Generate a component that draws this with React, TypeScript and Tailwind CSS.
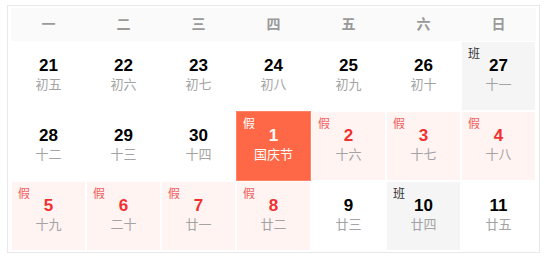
const weekDays = ["一", "二", "三", "四", "五", "六", "日"];

type Day = {
  day: string;
  lunar: string;
  tag?: "假" | "班";
  kind?: "holiday" | "work" | "festival";
};

const rows: Day[][] = [
  [
    { day: "21", lunar: "初五" },
    { day: "22", lunar: "初六" },
    { day: "23", lunar: "初七" },
    { day: "24", lunar: "初八" },
    { day: "25", lunar: "初九" },
    { day: "26", lunar: "初十" },
    { day: "27", lunar: "十一", tag: "班", kind: "work" },
  ],
  [
    { day: "28", lunar: "十二" },
    { day: "29", lunar: "十三" },
    { day: "30", lunar: "十四" },
    { day: "1", lunar: "国庆节", tag: "假", kind: "festival" },
    { day: "2", lunar: "十六", tag: "假", kind: "holiday" },
    { day: "3", lunar: "十七", tag: "假", kind: "holiday" },
    { day: "4", lunar: "十八", tag: "假", kind: "holiday" },
  ],
  [
    { day: "5", lunar: "十九", tag: "假", kind: "holiday" },
    { day: "6", lunar: "二十", tag: "假", kind: "holiday" },
    { day: "7", lunar: "廿一", tag: "假", kind: "holiday" },
    { day: "8", lunar: "廿二", tag: "假", kind: "holiday" },
    { day: "9", lunar: "廿三" },
    { day: "10", lunar: "廿四", tag: "班", kind: "work" },
    { day: "11", lunar: "廿五" },
  ],
];

function Cell({ d }: { d: Day }) {
  const bg =
    d.kind === "festival"
      ? "bg-[#ff6846] border-[#ff8566]"
      : d.kind === "holiday"
        ? "bg-[#fff4f2] border-white"
        : d.kind === "work"
          ? "bg-[#f5f5f5] border-white"
          : "bg-white border-white";
  const num =
    d.kind === "festival"
      ? "text-white"
      : d.kind === "holiday"
        ? "text-[#f23030]"
        : "text-black";
  const lunar = d.kind === "festival" ? "text-white" : "text-[#a3a3a3]";
  const tag =
    d.kind === "festival"
      ? "text-white"
      : d.kind === "holiday"
        ? "text-[#f25c5c]"
        : "text-[#333333]";

  return (
    <div className={`relative flex h-[70px] flex-col items-center border pt-[14px] ${bg}`}>
      {d.tag && (
        <span className={`absolute left-[6px] top-[5px] text-[12px] leading-[14px] ${tag}`}>
          {d.tag}
        </span>
      )}
      <span className={`text-[17px] font-bold leading-[20px] ${num}`}>{d.day}</span>
      <span className={`text-[13px] leading-[18px] ${lunar}`}>{d.lunar}</span>
    </div>
  );
}

export default function App() {
  return (
    <div className="bg-white pl-[7px] pt-[5px]" style={{ fontFamily: '"Liberation Sans", "Noto Sans CJK SC", sans-serif' }}>
      <div className="w-[533px] border border-[#e8e8e8] px-[3px] pb-[1px] pt-[2px]">
        <div className="grid h-[33px] grid-cols-7 bg-[#fafafa]">
          {weekDays.map((w) => (
            <div key={w} className="flex items-center justify-center text-[14px] font-bold text-[#999999]">
              {w}
            </div>
          ))}
        </div>
        {rows.map((row, i) => (
          <div key={i} className="grid grid-cols-7">
            {row.map((d) => (
              <Cell key={d.day} d={d} />
            ))}
          </div>
        ))}
      </div>
    </div>
  );
}
